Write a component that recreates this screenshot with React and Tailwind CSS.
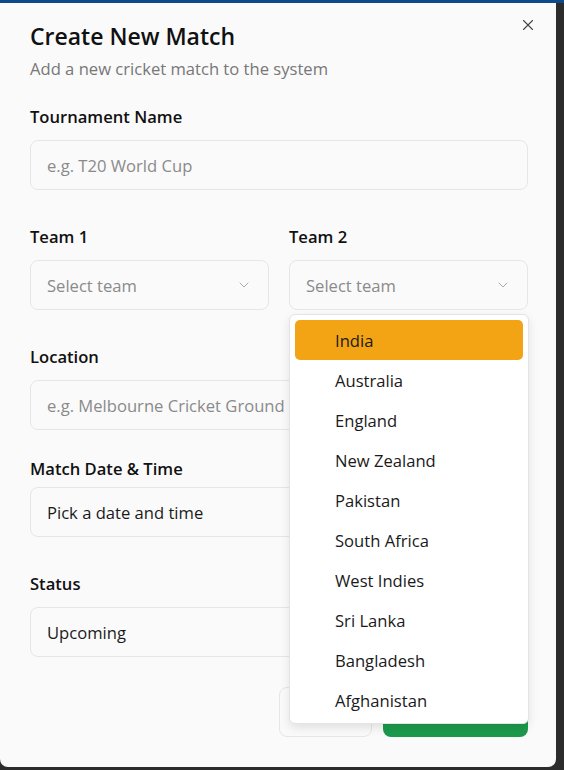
import { useState } from 'react'
import { X, ChevronDown } from 'lucide-react'

const TEAMS = ['India', 'Australia', 'England', 'New Zealand', 'Pakistan', 'South Africa', 'West Indies', 'Sri Lanka', 'Bangladesh', 'Afghanistan']

function Field({ children, className = '' }) {
  return (
    <div className={`h-[50px] rounded-lg border border-[#e6e6e6] bg-[#fafafa] px-4 pt-[2px] flex items-center text-[16.6px] ${className}`}>
      {children}
    </div>
  )
}

function Label({ children, className = '' }) {
  return <div className={`text-[16.6px] leading-6 font-semibold text-[#111] ${className}`}>{children}</div>
}

export default function App() {
  const [active] = useState('India')

  return (
    <div className="h-[770px] w-[564px] bg-[#2c2c2c] border-t-[3px] border-[#0d4a8c] overflow-hidden" style={{ fontFamily: '"Open Sans", "Noto Sans", sans-serif' }}>
      <div className="relative w-[556px] h-[764px] bg-[#fafafa] rounded-b-lg pl-[30px] pr-[28px] pt-[19px]">
        <button className="absolute right-[19px] top-[13px] text-[#444]">
          <X size={18} strokeWidth={1.5} />
        </button>

        {/* Header */}
        <h2 className="text-[23px] leading-7 font-semibold text-[#111]">Create New Match</h2>
        <p className="mt-[7px] text-[16.6px] leading-6 text-[#777]">Add a new cricket match to the system</p>

        {/* Tournament */}
        <Label className="mt-6">Tournament Name</Label>
        <Field className="mt-[11px] text-[#8a8a8a]">e.g. T20 World Cup</Field>

        {/* Teams */}
        <div className="mt-[35px] grid grid-cols-2 gap-[20px]">
          <div>
            <Label>Team 1</Label>
            <Field className="mt-[11px] justify-between text-[#8a8a8a]">
              <span>Select team</span>
              <ChevronDown size={16} strokeWidth={1.5} className="text-[#aaa] -mt-[2px]" />
            </Field>
          </div>
          <div>
            <Label>Team 2</Label>
            <Field className="mt-[11px] justify-between text-[#8a8a8a]">
              <span>Select team</span>
              <ChevronDown size={16} strokeWidth={1.5} className="text-[#aaa] -mt-[2px]" />
            </Field>
          </div>
        </div>

        {/* Location */}
        <Label className="mt-[35px]">Location</Label>
        <Field className="mt-[11px] text-[#8a8a8a]">e.g. Melbourne Cricket Ground</Field>

        {/* Date */}
        <Label className="mt-[27px]">Match Date &amp; Time</Label>
        <Field className="mt-[6px] text-[#1a1a1a]">Pick a date and time</Field>

        {/* Status */}
        <Label className="mt-[35px]">Status</Label>
        <Field className="mt-[11px] text-[#1a1a1a]">Upcoming</Field>

        {/* Actions */}
        <div className="mt-[30px] flex justify-end gap-[11px]">
          <button className="h-[50px] w-[93px] rounded-lg border border-[#e6e6e6] bg-[#fafafa] text-[16px] text-[#111]">Cancel</button>
          <button className="h-[50px] w-[145px] rounded-lg bg-[#1c9a4c] text-[16px] text-white font-medium">Create Match</button>
        </div>

        {/* Team 2 dropdown */}
        <div className="absolute left-[289px] top-[311px] w-[240px] rounded-md border border-[#e4e4e4] bg-white pt-[5px] pb-[3px] px-[5px] shadow-[0_4px_10px_rgba(0,0,0,0.1)]">
          {TEAMS.map(t => (
            <div
              key={t}
              className={`h-10 rounded-[5px] pl-10 pt-[2px] flex items-center text-[16.6px] text-[#1a1a1a] ${t === active ? 'bg-[#f2a415]' : ''}`}
            >
              {t}
            </div>
          ))}
        </div>
      </div>
    </div>
  )
}
